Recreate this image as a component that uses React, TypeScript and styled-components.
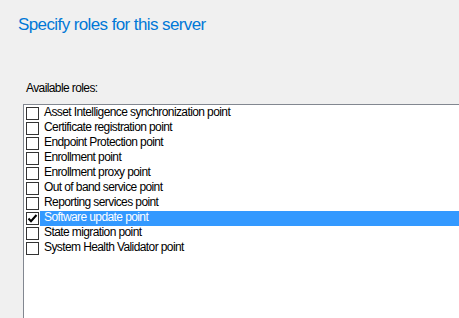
import React from 'react';
import styled, { createGlobalStyle } from 'styled-components';

const GlobalStyle = createGlobalStyle`
  html, body {
    margin: 0;
    padding: 0;
    background: #f0f0f0;
  }
`;

const Page = styled.div`
  width: 459px;
  height: 318px;
  overflow: hidden;
  background: #f0f0f0;
  font-family: "Liberation Sans", Arial, sans-serif;
  color: #000;
`;

const Title = styled.h1`
  margin: 0;
  padding: 15px 0 0 18px;
  font-size: 17px;
  line-height: 20px;
  font-weight: normal;
  letter-spacing: -0.6px;
  color: #0078d7;
`;

const Label = styled.div`
  margin: 46px 0 0 26px;
  font-size: 12px;
  line-height: 15px;
  letter-spacing: -0.6px;
`;

const ListBox = styled.ul`
  list-style: none;
  margin: 8px 0 0 23px;
  padding: 1px 0 0 0;
  width: 460px;
  height: 260px;
  background: #fff;
  border: 1px solid #828790;
`;

const Row = styled.li`
  display: flex;
  align-items: flex-start;
  height: 15px;
  padding-left: 2px;
`;

const Box = styled.span`
  box-sizing: border-box;
  flex: 0 0 auto;
  width: 13px;
  height: 13px;
  margin-top: 1px;
  border: 1px solid #333;
  background: #fff;
  display: flex;
  align-items: center;
  justify-content: center;
`;

const Text = styled.span<{ $selected?: boolean }>`
  flex: 1;
  margin-left: 1px;
  padding-left: 4px;
  height: 15px;
  font-size: 12px;
  line-height: 13px;
  letter-spacing: -0.6px;
  white-space: nowrap;
  background: ${p => (p.$selected ? '#3399ff' : 'transparent')};
  color: ${p => (p.$selected ? '#fff' : '#000')};
`;

const roles = [
  'Asset Intelligence synchronization point',
  'Certificate registration point',
  'Endpoint Protection point',
  'Enrollment point',
  'Enrollment proxy point',
  'Out of band service point',
  'Reporting services point',
  'Software update point',
  'State migration point',
  'System Health Validator point',
];

const selected = 'Software update point';

const Check = () => (
  <svg width="11" height="11" viewBox="0 0 11 11">
    <path d="M1.5 5.5 L4 8.2 L9.5 2" fill="none" stroke="#000" strokeWidth="2" />
  </svg>
);

export default function App() {
  return (
    <Page>
      <GlobalStyle />
      <Title>Specify roles for this server</Title>
      <Label>Available roles:</Label>
      <ListBox>
        {roles.map(r => (
          <Row key={r}>
            <Box>{r === selected && <Check />}</Box>
            <Text $selected={r === selected}>{r}</Text>
          </Row>
        ))}
      </ListBox>
    </Page>
  );
}
